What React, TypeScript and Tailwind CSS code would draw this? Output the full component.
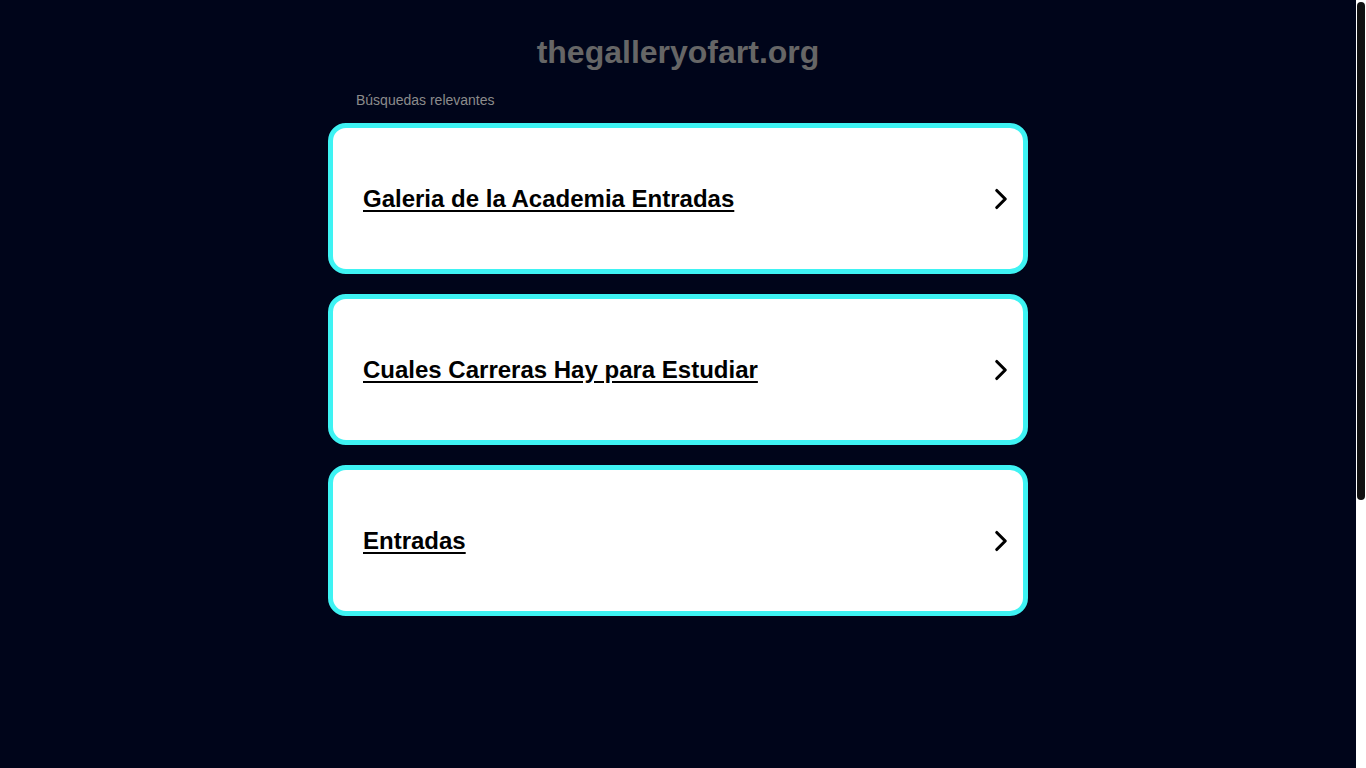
import { ChevronRight } from 'lucide-react';

const links = ['Galeria de la Academia Entradas', 'Cuales Carreras Hay para Estudiar', 'Entradas'];

export default function App() {
  return (
    <div
      className="flex h-screen overflow-hidden bg-[#00051a]"
      style={{ fontFamily: '"Liberation Sans", Arial, sans-serif' }}
    >
      <main className="flex-1">
        <div className="mx-auto w-[700px] pt-[33px]">
          <h1 className="text-center text-[32px] font-bold leading-[38px] text-[#666]">thegalleryofart.org</h1>
          <p className="mt-[21px] pl-[28px] text-[14px] leading-[17px] text-[#8c8c8c]">Búsquedas relevantes</p>
          <div className="mt-[14px] flex flex-col gap-[20px]">
            {links.map((l) => (
              <a
                key={l}
                href="#"
                className="flex h-[151px] items-center justify-between rounded-[18px] border-[5px] border-[#3ef3f3] bg-white pl-[30px] pr-[5px]"
              >
                <span className="text-[24px] font-bold text-black underline underline-offset-[3px]">{l}</span>
                <ChevronRight className="h-[34px] w-[34px] text-black" strokeWidth={2.2} />
              </a>
            ))}
          </div>
        </div>
      </main>
      {/* scrollbar */}
      <div className="w-[10px] shrink-0 bg-white px-[1px] pt-[2px]">
        <div className="h-[498px] rounded-[4px] bg-[#111]" />
      </div>
    </div>
  );
}
